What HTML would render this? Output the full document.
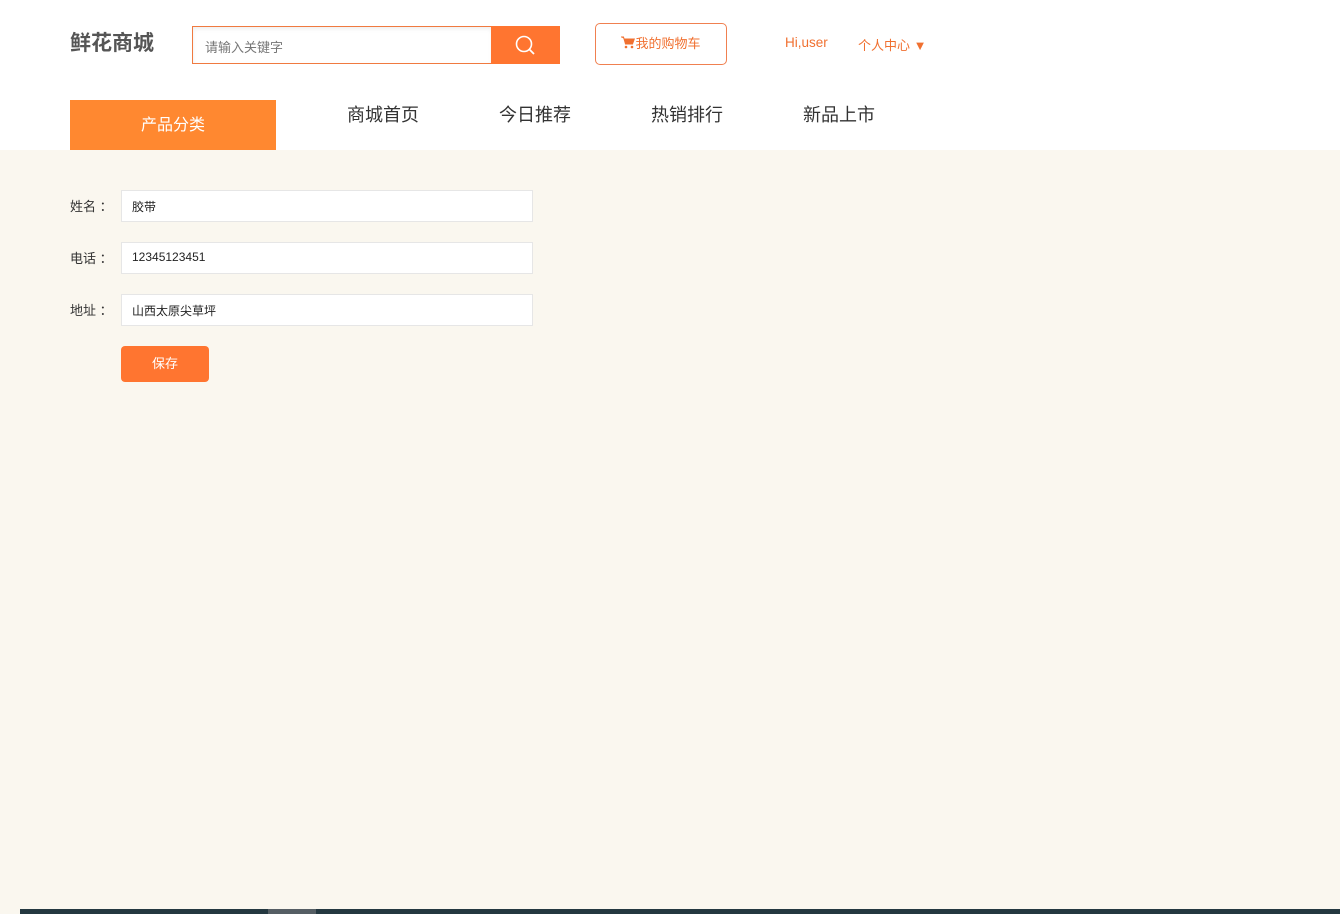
<!DOCTYPE html>
<html><head><meta charset="utf-8"><style>
*{margin:0;padding:0;box-sizing:border-box}
body{width:1340px;height:914px;overflow:hidden;background:#faf7ef;font-family:"Liberation Sans","Microsoft YaHei","Noto Sans CJK SC",sans-serif;position:relative}
.hdr{position:absolute;left:0;top:0;width:1340px;height:150px;background:#fff}
.abs{position:absolute}
.logo{left:70px;top:27px;font-size:21px;font-weight:bold;color:#555}
.search{left:192px;top:26px;width:300px;height:38px;border:1px solid #f07a40;border-right:none;font-size:13px;color:#777;padding:10px 0 0 12px;box-shadow:inset 0 2px 4px #eee}
.sbtn{left:491px;top:26px;width:69px;height:38px;background:#ff7530}
.cart{left:595px;top:23px;width:132px;height:42px;border:1px solid #f08050;border-radius:5px;color:#f07030;font-size:13px;text-align:center;line-height:40px}
.hi{left:785px;top:35px;font-size:13.5px;color:#f07030}
.pc{left:858px;top:35px;font-size:13px;color:#f07030}
.cat{left:70px;top:100px;width:206px;height:50px;background:#ff8830;color:#fff;font-size:16px;text-align:center;line-height:52px}
.nav{top:101px;font-size:18px;color:#333}
.lbl{left:70px;font-size:13px;color:#333}
.inp{left:121px;width:412px;height:32px;background:#fff;border:1px solid #e6e6e6;font-size:12px;color:#222;padding:7px 0 0 10px}
.save{left:121px;top:346px;width:88px;height:36px;background:#ff7530;border-radius:4px;color:#fff;font-size:13px;text-align:center;line-height:36px}
.bar{left:20px;top:909px;width:1320px;height:5px;background:#243840}
.thumb{left:268px;top:909px;width:48px;height:5px;background:#555e64}
</style></head><body>
<div class="hdr"></div>
<div class="abs logo">鲜花商城</div>
<div class="abs search">请输入关键字</div>
<div class="abs sbtn"><svg width="69" height="38"><circle cx="33" cy="18" r="7.5" fill="none" stroke="#fff" stroke-width="1.6"/><line x1="38.5" y1="23.5" x2="43" y2="28" stroke="#fff" stroke-width="1.8"/></svg></div>
<div class="abs cart"><svg width="14" height="13" viewBox="0 0 14 13" style="vertical-align:-1px"><path d="M0 1h2.5l2 7h7l1.8-5H3.5" fill="#f07030" stroke="#f07030" stroke-width="1"/><circle cx="5" cy="11" r="1.3" fill="#f07030"/><circle cx="11" cy="11" r="1.3" fill="#f07030"/></svg>我的购物车</div>
<div class="abs hi">Hi,user</div>
<div class="abs pc">个人中心 <span style="font-size:13px">▼</span></div>
<div class="abs cat">产品分类</div>
<div class="abs nav" style="left:347px">商城首页</div>
<div class="abs nav" style="left:499px">今日推荐</div>
<div class="abs nav" style="left:651px">热销排行</div>
<div class="abs nav" style="left:803px">新品上市</div>
<div class="abs lbl" style="top:196px">姓名 ：</div>
<div class="abs inp" style="top:190px">胶带</div>
<div class="abs lbl" style="top:248px">电话 ：</div>
<div class="abs inp" style="top:242px">12345123451</div>
<div class="abs lbl" style="top:300px">地址 ：</div>
<div class="abs inp" style="top:294px">山西太原尖草坪</div>
<div class="abs save">保存</div>
<div class="abs bar"></div>
<div class="abs thumb"></div>
</body></html>
